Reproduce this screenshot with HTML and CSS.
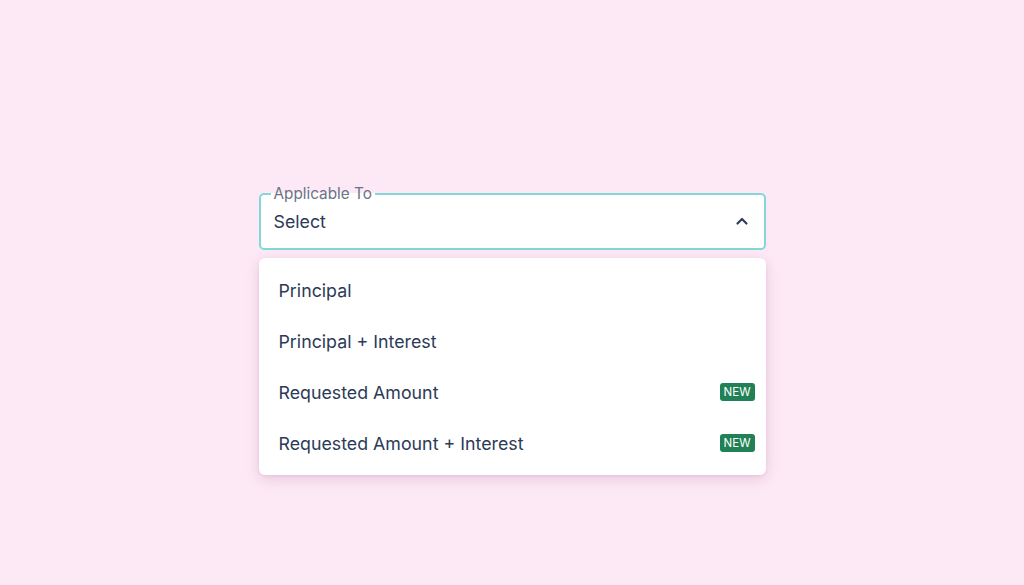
FILE: index.html
```html
<!DOCTYPE html>
<html lang="en">
<head>
<meta charset="utf-8">
<title>Applicable To</title>
<link rel="stylesheet" href="styles.css">
</head>
<body>
<div class="page">
  <div class="select-wrap">
    <fieldset class="field">
      <legend class="field-label">Applicable To</legend>
      <div class="field-row">
        <span class="field-value">Select</span>
        <svg class="chevron" width="14" height="14" viewBox="0 0 14 14" aria-hidden="true">
          <path d="M2.5 9.5 L7 5 L11.5 9.5" fill="none" stroke="#2f3d5c" stroke-width="2.2" stroke-linecap="round" stroke-linejoin="round"/>
        </svg>
      </div>
    </fieldset>
    <ul class="menu">
      <li class="menu-item"><span>Principal</span></li>
      <li class="menu-item"><span>Principal + Interest</span></li>
      <li class="menu-item"><span>Requested Amount</span><span class="badge">NEW</span></li>
      <li class="menu-item"><span>Requested Amount + Interest</span><span class="badge">NEW</span></li>
    </ul>
  </div>
</div>
</body>
</html>
```

FILE: styles.css
```css
* { box-sizing: border-box; }
html, body {
  margin: 0;
  height: 100%;
}
body {
  background: #fde9f5;
  font-family: Inter, "Noto Sans", "Liberation Sans", sans-serif;
  color: #2c3a58;
}
.page {
  display: flex;
  justify-content: center;
  padding-top: 185px;
}
.select-wrap {
  width: 507px;
  display: flex;
  flex-direction: column;
}
.field {
  margin: 0;
  border-width: 2px;
  border-style: solid;
  border-color: #84d6d7;
  border-radius: 5px;
  background: #ffffff;
  padding: 0 15px 0 13px;
  height: 65px;
  min-width: 0;
}
.field-label {
  font-size: 15.3px;
  color: #6b7386;
  padding: 0 3px;
  margin-left: -3px;
  line-height: 17px;
}
.field-row {
  display: flex;
  align-items: center;
  justify-content: space-between;
  height: 36px;
  margin-top: 1px;
}
.field-value {
  font-size: 17.8px;
  color: #2c3a58;
}
.chevron {
  display: block;
}
.menu {
  list-style: none;
  margin: 8px 0 0;
  padding: 6.5px 0;
  background: #ffffff;
  border-radius: 6px;
  box-shadow: 0 4px 14px rgba(160, 90, 140, 0.22), 0 1px 3px rgba(160, 90, 140, 0.12);
}
.menu-item {
  height: 51px;
  display: flex;
  align-items: center;
  justify-content: space-between;
  padding: 0 11px 0 20px;
  font-size: 17.8px;
  color: #2c3a58;
}
.badge {
  background: #1f8155;
  color: #ffffff;
  font-size: 11.5px;
  line-height: 18px;
  height: 18px;
  padding: 0 4px;
  border-radius: 3px;
}
```
